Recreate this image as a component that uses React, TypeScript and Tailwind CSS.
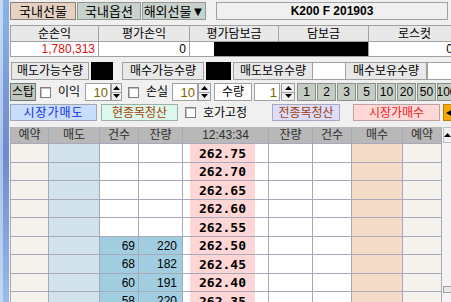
import React from "react";

const FONT = "font-['Liberation_Sans','Noto_Sans_CJK_KR',sans-serif]";

function Tri({ up }: { up: boolean }) {
  return (
    <svg width="7" height="4" viewBox="0 0 7 4">
      {up ? <path d="M3.5 0 L7 4 L0 4Z" fill="#000" /> : <path d="M0 0 L7 0 L3.5 4Z" fill="#000" />}
    </svg>
  );
}

function Spinner({ className }: { className: string }) {
  return (
    <div className={`flex flex-col h-full border border-[#a0a0a0] bg-[#f0f0f0] ${className}`}>
      <div className="flex-1 flex items-center justify-center border-b border-[#a0a0a0]">
        <Tri up />
      </div>
      <div className="flex-1 flex items-center justify-center">
        <Tri up={false} />
      </div>
    </div>
  );
}

function NumInput({ value, className }: { value: string; className: string }) {
  return (
    <div
      className={`h-full bg-white border border-[#a0a0a0] flex items-center justify-end pr-[2px] text-[#7a6400] text-[13px] ${className}`}
    >
      {value}
    </div>
  );
}

function Check({ className }: { className: string }) {
  return <div className={`w-[11px] h-[11px] bg-white border border-[#808080] shadow-[inset_1px_1px_0_#c0c0c0] ${className}`} />;
}

function Label({ text, className }: { text: string; className: string }) {
  return (
    <div className={`h-full bg-[#e8e8e8] border border-[#a0a0a0] flex items-center justify-center whitespace-nowrap ${className}`}>
      {text}
    </div>
  );
}

const rows = [
  { p: "262.75", c: "", q: "", h: "h-[19px]" },
  { p: "262.70", c: "", q: "", h: "h-[18px]" },
  { p: "262.65", c: "", q: "", h: "h-[19px]" },
  { p: "262.60", c: "", q: "", h: "h-[18px]" },
  { p: "262.55", c: "", q: "", h: "h-[19px]" },
  { p: "262.50", c: "69", q: "220", h: "h-[18px]" },
  { p: "262.45", c: "68", q: "182", h: "h-[19px]" },
  { p: "262.40", c: "60", q: "191", h: "h-[18px]" },
  { p: "262.35", c: "58", q: "220", h: "h-[19px]" },
];

const cell = "border-r border-b border-[#a8a8b8]";

export default function App() {
  return (
    <div className={`w-[451px] h-[302px] overflow-hidden bg-[#f0f0f0] flex text-[12px] leading-none text-black ${FONT}`}>
      {/* left window edge */}
      <div className="w-[9px] h-full shrink-0 flex">
        <div className="w-[3px] h-full bg-linear-to-b from-[#c4dcf6] via-[#a8c4ec] to-[#c0d8f4]" />
        <div className="w-[6px] h-full bg-linear-to-b from-[#8cb4e8] via-[#7088cc] to-[#98bce8]" />
      </div>
      <div className="flex-1 min-w-0 flex flex-col pl-[1px] overflow-hidden whitespace-nowrap">
        {/* Row 1 */}
        <div className="flex h-[18px] mt-[2px] shrink-0">
          <div className="w-[66px] h-full bg-[#e6d2c2] border border-[#8c8078] flex items-center justify-center text-[13px] shrink-0">
            국내선물
          </div>
          <div className="ml-[1px] w-[64px] h-full bg-[#c8d2cc] border border-[#909890] flex items-center justify-center text-[13px] shrink-0">
            국내옵션
          </div>
          <div className="ml-[1px] w-[64px] h-full bg-[#c8d2cc] border border-[#909890] flex items-center justify-center text-[13px] shrink-0">
            해외선물▼
          </div>
          <div className="ml-[10px] w-[232px] shrink-0 h-full bg-[#f0f0f0] border border-[#a0a0a0] flex items-center justify-center font-bold text-[12px]">
            K200 F 201903
          </div>
        </div>

        {/* Row 2 */}
        <div className="mt-[5px] shrink-0 border-t border-l border-[#a0a0a0] grid grid-cols-[88px_91px_89px_90px_92px] w-[450px]">
          {["순손익", "평가손익", "평가담보금", "담보금", "로스컷"].map((t) => (
            <div key={t} className="h-[16px] bg-[#e8e8e8] border-r border-b border-[#a0a0a0] flex items-center justify-center">
              {t}
            </div>
          ))}
          <div className="h-[15px] bg-white border-r border-b border-[#a0a0a0] flex items-center justify-end pr-[3px] text-[#e01010]">
            1,780,313
          </div>
          <div className="h-[15px] bg-white border-r border-b border-[#a0a0a0] flex items-center justify-end pr-[3px]">0</div>
          <div className="h-[15px] bg-white border-b border-[#a0a0a0] flex">
            <div className="w-[24px]" />
            <div className="flex-1 bg-black" />
          </div>
          <div className="h-[15px] bg-black border-r border-b border-[#a0a0a0]" />
          <div className="h-[15px] bg-white border-b border-[#a0a0a0] flex items-center justify-end pr-[8px]">0</div>
        </div>

        {/* Row 3 */}
        <div className="flex h-[18px] mt-[5px] shrink-0">
          <Label text="매도가능수량" className="ml-[1px] w-[78px] shrink-0" />
          <div className="ml-[2px] w-[22px] h-full bg-black shrink-0" />
          <Label text="매수가능수량" className="ml-[9px] w-[82px] shrink-0" />
          <div className="ml-[2px] w-[25px] h-full bg-black shrink-0" />
          <Label text="매도보유수량" className="ml-[2px] w-[80px] shrink-0" />
          <div className="w-[32px] h-full bg-white border-y border-[#a0a0a0] shrink-0" />
          <Label text="매수보유수량" className="w-[82px] shrink-0" />
          <div className="w-[40px] h-full bg-white border border-[#a0a0a0] shrink-0" />
        </div>

        {/* Row 4 */}
        <div className="flex h-[18px] mt-[3px] shrink-0 items-center">
          <div className="w-[26px] h-full bg-[#c0c8c0] border border-[#707870] flex items-center justify-center text-[12px] shrink-0">
            스탑
          </div>
          <Check className="ml-[4px] shrink-0" />
          <div className="ml-[7px] w-[24px] text-[12px] shrink-0">이익</div>
          <NumInput value="10" className="ml-[3px] w-[26px] shrink-0" />
          <Spinner className="w-[11px] shrink-0" />
          <Check className="ml-[6px] shrink-0" />
          <div className="ml-[7px] w-[24px] text-[12px] shrink-0">손실</div>
          <NumInput value="10" className="ml-[2px] w-[26px] shrink-0" />
          <Spinner className="w-[13px] shrink-0" />
          <div className="ml-[3px] w-[38px] h-full bg-white border border-[#a0a0a0] flex items-center justify-center text-[12px] shrink-0">
            수량
          </div>
          <NumInput value="1" className="ml-[2px] w-[26px] shrink-0" />
          <Spinner className="ml-[1px] w-[14px] shrink-0" />
          <div className="ml-[2px] flex gap-[1px] h-full shrink-0">
            {["1", "2", "3", "5", "10", "20", "50", "100"].map((n) => (
              <div
                key={n}
                className="w-[19px] h-full bg-[#c4ccc4] border border-[#889088] flex items-center justify-center text-[12px] overflow-hidden shrink-0"
              >
                {n}
              </div>
            ))}
          </div>
        </div>

        {/* Row 5 */}
        <div className="flex h-[17px] mt-[3px] shrink-0 items-center">
          <div className="w-[87px] h-full bg-[#c8dcfc] border border-[#a0a8b8] flex items-center justify-center text-[#1030e8] tracking-[1px] shrink-0">
            시장가매도
          </div>
          <div className="ml-[4px] w-[77px] h-full bg-[#dcf8ec] border border-[#a0b0a8] flex items-center justify-center text-[#a04000] shrink-0">
            현종목청산
          </div>
          <Check className="ml-[7px] shrink-0" />
          <div className="ml-[7px] w-[48px] text-[12px] shrink-0">호가고정</div>
          <div className="ml-[21px] w-[68px] h-full bg-[#dcdcfc] border border-[#a8a8c0] flex items-center justify-center text-[#a04000] shrink-0">
            전종목청산
          </div>
          <div className="ml-[13px] w-[87px] h-full bg-[#ffd8d8] border border-[#c0a0a0] flex items-center justify-center text-[#f02020] shrink-0">
            시장가매수
          </div>
          <div className="ml-[3px] w-[12px] h-full bg-[#f8a800] border border-[#c08000] flex items-center pl-[2px] shrink-0">
            <svg width="7" height="8" viewBox="0 0 7 8">
              <path d="M0 4 L7 0 L7 8Z" fill="#000" />
            </svg>
          </div>
        </div>

        {/* Table */}
        <div className="mt-[6px] flex shrink-0">
          <div className="border-l border-[#a8a8b8] grid grid-cols-[38px_51px_39px_44px_86px_44px_39px_51px_39px] w-[432px] shrink-0">
            {["예약", "매도", "건수", "잔량", "12:43:34", "잔량", "건수", "매수", "예약"].map((t, i) => (
              <div key={i} className={`h-[17px] bg-[#b8b8b8] ${cell} flex items-center justify-center text-[#303030]`}>
                {t}
              </div>
            ))}
            {rows.map((r, i) => (
              <React.Fragment key={i}>
                <div className={`${r.h} bg-[#f5f2ee] ${cell}`} />
                <div className={`${r.h} bg-[#d2e2ea] ${cell}`} />
                <div
                  className={`${r.h} ${r.c ? "bg-[#a0cde0]" : "bg-white"} ${cell} flex items-center justify-end pr-[3px]`}
                >
                  {r.c}
                </div>
                <div
                  className={`${r.h} ${r.q ? "bg-[#a0cde0]" : "bg-white"} ${cell} flex items-center justify-end pr-[5px]`}
                >
                  {r.q}
                </div>
                <div className={`${r.h} bg-white ${cell} flex`}>
                  <div className="w-[7px]" />
                  <div className="w-[65px] bg-[#ffd6d6] flex items-center justify-center font-bold text-[13px] font-['DejaVu_Sans_Mono',monospace]">
                    {r.p}
                  </div>
                </div>
                <div className={`${r.h} bg-white ${cell}`} />
                <div className={`${r.h} bg-white ${cell}`} />
                <div className={`${r.h} bg-[#f2dcc8] ${cell}`} />
                <div className={`${r.h} bg-[#f5f2ee] ${cell}`} />
              </React.Fragment>
            ))}
          </div>
          {/* scrollbar */}
          <div className="w-[10px] h-[180px] bg-[#f4f4f4] flex flex-col shrink-0">
            <div className="h-[16px] ml-[1px] bg-[#f0f0f0] border border-[#c0c0c0] flex items-center justify-center">
              <svg width="7" height="4" viewBox="0 0 7 4">
                <path d="M3.5 0 L7 4 L0 4Z" fill="#000" />
              </svg>
            </div>
            <div className="h-[143px]" />
            <div className="h-[7px] ml-[1px] bg-[#e8e8e8] border border-[#a0a0a0]" />
          </div>
        </div>
      </div>
    </div>
  );
}
